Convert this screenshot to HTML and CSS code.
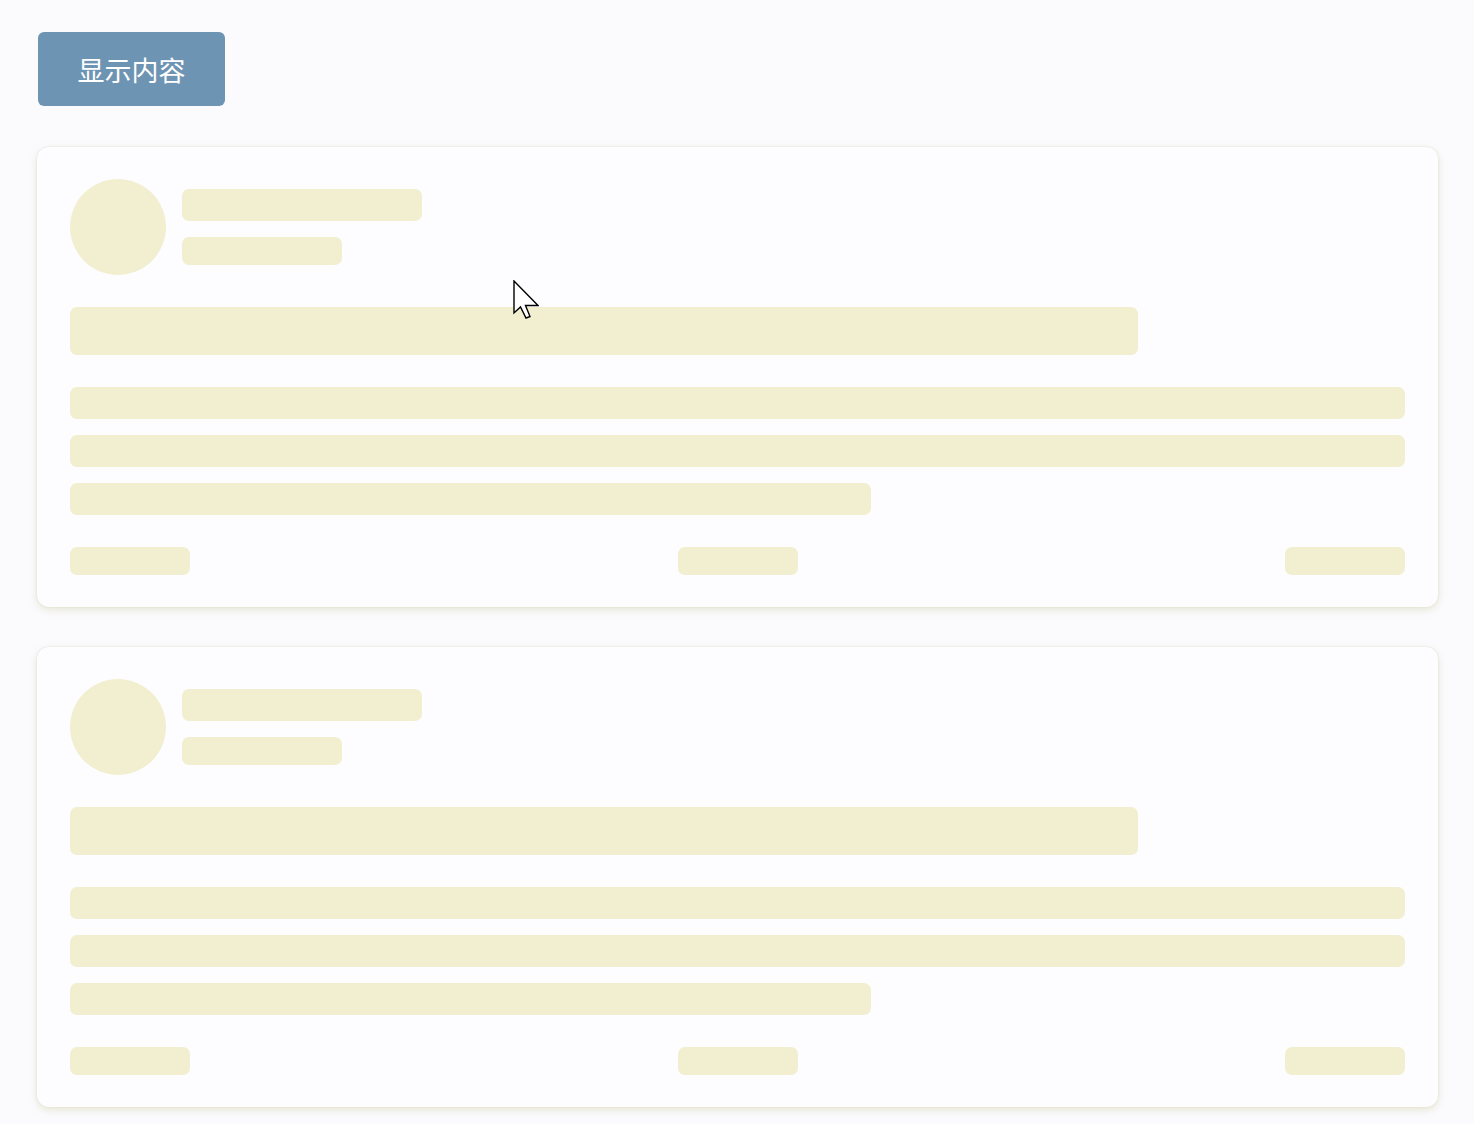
FILE: index.html
```html
<!DOCTYPE html>
<html lang="zh-CN">
<head>
<meta charset="utf-8">
<title>骨架屏</title>
<link rel="stylesheet" href="styles.css">
</head>
<body>
<main class="page">
  <button class="toggle-btn" type="button">显示内容</button>

  <section class="card">
    <div class="card-head">
      <div class="sk sk-avatar"></div>
      <div class="head-lines">
        <div class="sk sk-name"></div>
        <div class="sk sk-meta"></div>
      </div>
    </div>
    <div class="sk sk-title"></div>
    <div class="body-lines">
      <div class="sk sk-line"></div>
      <div class="sk sk-line"></div>
      <div class="sk sk-line sk-line-short"></div>
    </div>
    <div class="card-foot">
      <div class="sk sk-action"></div>
      <div class="sk sk-action"></div>
      <div class="sk sk-action"></div>
    </div>
  </section>

  <section class="card">
    <div class="card-head">
      <div class="sk sk-avatar"></div>
      <div class="head-lines">
        <div class="sk sk-name"></div>
        <div class="sk sk-meta"></div>
      </div>
    </div>
    <div class="sk sk-title"></div>
    <div class="body-lines">
      <div class="sk sk-line"></div>
      <div class="sk sk-line"></div>
      <div class="sk sk-line sk-line-short"></div>
    </div>
    <div class="card-foot">
      <div class="sk sk-action"></div>
      <div class="sk sk-action"></div>
      <div class="sk sk-action"></div>
    </div>
  </section>
</main>

<svg class="cursor" width="26" height="40" viewBox="-1 -1 26 40" aria-hidden="true">
  <path d="M0 0 L0 32 L6.5 26 L12 37 L16 35.5 L11.5 24.5 L24 24.5 Z" fill="#fff" stroke="#000" stroke-width="1.4" stroke-linejoin="miter"/>
</svg>
</body>
</html>
```

FILE: styles.css
```css
html, body {
  margin: 0;
  background: #fbfbfe;
}

body {
  font-family: "Noto Sans CJK SC", "Noto Sans", sans-serif;
}

.page {
  padding: 32px 36px 40px 37px;
  display: flex;
  flex-direction: column;
  align-items: flex-start;
}

.toggle-btn {
  width: 187px;
  height: 74px;
  border: none;
  border-radius: 6px;
  background: #6e94b3;
  color: #ffffff;
  font-family: "Noto Sans CJK SC", sans-serif;
  font-size: 27px;
  line-height: 1;
  padding: 0;
  margin: 0 0 41px 1px;
  cursor: pointer;
}

.card {
  align-self: stretch;
  box-sizing: border-box;
  padding: 32px 33px;
  margin-bottom: 40px;
  background: #fdfdff;
  border-radius: 12px;
  box-shadow: 0 3px 8px rgba(200, 196, 150, 0.38), 0 0 2px rgba(200, 196, 160, 0.45);
  display: flex;
  flex-direction: column;
}

/* skeleton blocks */
.sk {
  background: #f2efd0;
  border-radius: 7px;
}

.card-head {
  display: flex;
  align-items: center;
  gap: 16px;
}

.sk-avatar {
  width: 96px;
  height: 96px;
  border-radius: 50%;
  flex: none;
}

.head-lines {
  display: flex;
  flex-direction: column;
  gap: 16px;
}

.sk-name {
  width: 240px;
  height: 32px;
}

.sk-meta {
  width: 160px;
  height: 28px;
}

.sk-title {
  width: 80%;
  height: 48px;
  margin-top: 32px;
}

.body-lines {
  margin-top: 32px;
  display: flex;
  flex-direction: column;
  gap: 16px;
}

.sk-line {
  height: 32px;
}

.sk-line-short {
  width: 60%;
}

.card-foot {
  margin-top: 32px;
  display: flex;
  justify-content: space-between;
}

.sk-action {
  width: 120px;
  height: 28px;
}

/* mouse pointer drawn over the page */
.cursor {
  position: absolute;
  left: 513px;
  top: 280px;
  pointer-events: none;
}
```
